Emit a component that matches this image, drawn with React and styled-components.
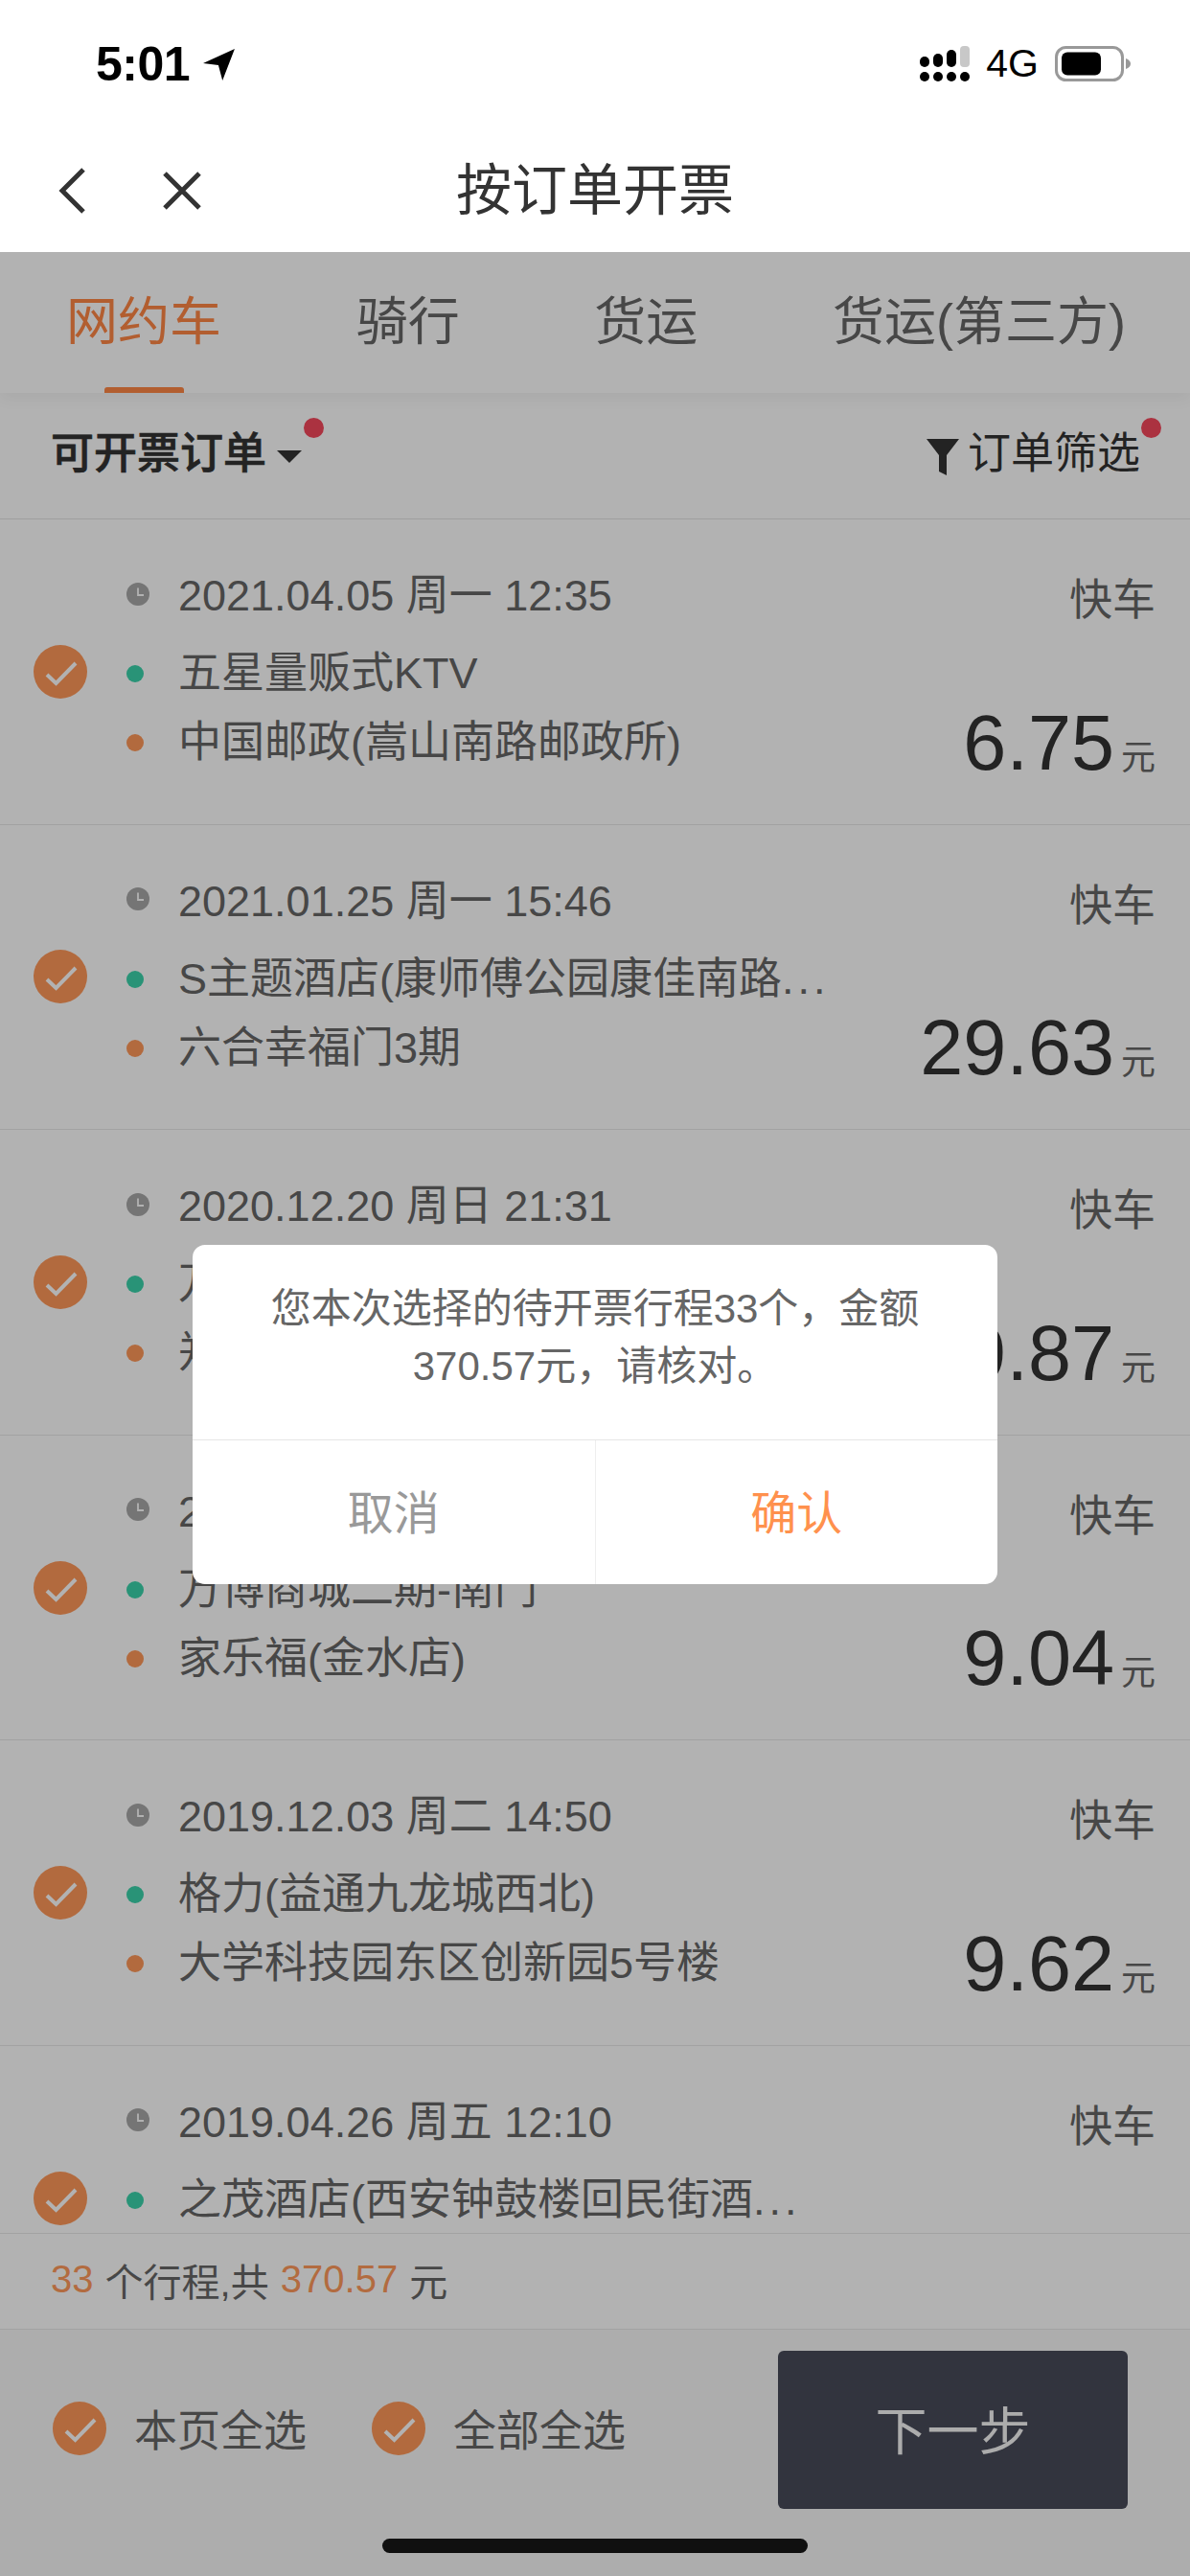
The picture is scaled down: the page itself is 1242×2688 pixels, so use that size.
import React from "react";
import styled, { createGlobalStyle } from "styled-components";

const FONT = '"Liberation Sans", "Noto Sans CJK SC", sans-serif';

const Global = createGlobalStyle`
  html, body { margin: 0; padding: 0; background: #fff; }
  * { box-sizing: border-box; }
`;

const Page = styled.div`
  position: relative;
  width: 1242px;
  height: 2688px;
  display: flex;
  flex-direction: column;
  overflow: hidden;
  background: #fff;
  font-family: ${FONT};
  color: #333;
`;

const Top = styled.header`
  position: relative;
  z-index: 2;
  height: 263px;
  flex-shrink: 0;
  background: #fff;
  display: flex;
  flex-direction: column;
`;

const StatusBar = styled.div`
  height: 130px;
  padding: 44px 61px 0 100px;
  display: flex;
  justify-content: space-between;
  align-items: flex-start;
  color: #000;
`;

const Clock = styled.div`
  display: flex;
  align-items: center;
  gap: 14px;
  height: 46px;
  font-size: 50px;
  font-weight: 700;
  letter-spacing: -0.5px;
`;

const Indicators = styled.div`
  display: flex;
  align-items: center;
  gap: 17px;
  height: 46px;
  margin-top: -1px;
  font-size: 41px;
`;

const NavBar = styled.div`
  position: relative;
  flex: 1;
  display: flex;
  align-items: center;
  padding: 5px 0 0 60px;
  gap: 78px;
`;

const NavTitle = styled.h1`
  position: absolute;
  left: 0;
  right: 0;
  top: 36px;
  margin: 0;
  text-align: center;
  font-size: 58px;
  line-height: 66px;
  font-weight: 400;
  color: #333;
`;

const Tabs = styled.nav`
  height: 147px;
  flex-shrink: 0;
  background: #fff;
  padding: 0 67px 0 69px;
  display: flex;
  justify-content: space-between;
  position: relative;
  z-index: 1;
  box-shadow: 0 5px 16px rgba(0, 0, 0, 0.06);
`;

const Tab = styled.div`
  position: relative;
  height: 100%;
  padding-top: 43px;
  font-size: 54px;
  line-height: 60px;
  color: ${(p) => (p.$active ? "#ff8746" : "#666")};

  ${(p) =>
    p.$active &&
    `&::after {
      content: "";
      position: absolute;
      left: 40px;
      bottom: 0;
      width: 83px;
      height: 6px;
      border-radius: 3px 3px 0 0;
      background: #ff8746;
    }`}
`;

const FilterBar = styled.div`
  height: 132px;
  flex-shrink: 0;
  background: #fff;
  border-bottom: 1px solid #e4e4e4;
  padding: 0 52px 0 53px;
  display: flex;
  justify-content: space-between;
  align-items: center;
`;

const FilterLabel = styled.div`
  position: relative;
  display: flex;
  align-items: center;
  font-size: 45px;
  line-height: 54px;
  font-weight: ${(p) => (p.$strong ? 500 : 400)};
  -webkit-text-stroke: ${(p) => (p.$strong ? "0.7px #333" : "0")};
  margin-top: -4px;
`;

const Caret = styled.span`
  width: 0;
  height: 0;
  margin-left: 11px;
  margin-top: 5px;
  border-left: 13px solid transparent;
  border-right: 13px solid transparent;
  border-top: 13px solid #333;
`;

const RedDot = styled.span`
  position: absolute;
  top: -11px;
  right: ${(p) => p.$right}px;
  width: 21px;
  height: 21px;
  border-radius: 50%;
  background: #f5485c;
`;

const FunnelSlot = styled.span`
  margin: 6px 9px 0 0;
`;

const List = styled.main`
  flex: 1;
  min-height: 0;
  overflow: hidden;
  background: #fff;
`;

const Row = styled.article`
  height: 318.6px;
  border-bottom: 1px solid #e8e8e8;
  display: flex;
  align-items: stretch;
  padding: 0 36px 0 35px;
`;

const CheckSlot = styled.div`
  width: 97px;
  flex-shrink: 0;
  display: flex;
  align-items: center;
`;

const Stops = styled.div`
  flex: 1;
  min-width: 0;
  padding-top: 57px;
  display: flex;
  flex-direction: column;
`;

const StopLine = styled.div`
  height: 46px;
  display: flex;
  align-items: center;
  font-size: 45px;
  line-height: 46px;
  color: #666;
  white-space: nowrap;
  margin-bottom: ${(p) => p.$after}px;
`;

const Marker = styled.span`
  width: 54px;
  flex-shrink: 0;
  display: flex;
  align-items: center;
  margin-bottom: ${(p) => p.$lift || 0}px;
`;

const Dot = styled.i`
  display: block;
  width: 18px;
  height: 18px;
  border-radius: 50%;
  background: ${(p) => p.$color};
`;

const Dots = styled.span`
  letter-spacing: 4px;
`;

const Side = styled.div`
  flex-shrink: 0;
  padding: 62px 0 30px;
  display: flex;
  flex-direction: column;
  justify-content: space-between;
  align-items: flex-end;
`;

const Kind = styled.div`
  font-size: 45px;
  line-height: 46px;
  color: #666;
`;

const Amount = styled.div`
  display: flex;
  align-items: baseline;
  gap: 7px;
  font-size: 81px;
  line-height: 78px;
  color: #333;
`;

const Yuan = styled.span`
  font-size: 36px;
  color: #666;
`;

const Summary = styled.div`
  height: 100px;
  flex-shrink: 0;
  background: #fff;
  border-top: 1px solid #e8e8e8;
  padding: 0 0 4px 53px;
  display: flex;
  align-items: center;
  font-size: 40px;
  white-space: pre;
  word-spacing: 1px;
  color: #666;
`;

const Accent = styled.span`
  color: #ff9a5c;
`;

const Footer = styled.footer`
  position: relative;
  height: 258px;
  flex-shrink: 0;
  background: #f8f8f8;
  border-top: 1px solid #e8e8e8;
  padding: 22px 65px 0 55px;
  display: flex;
  align-items: flex-start;
`;

const SelectAll = styled.div`
  height: 165px;
  padding-bottom: 4px;
  display: flex;
  align-items: center;
  gap: 29px;
  margin-right: 68px;
  font-size: 45px;
  color: #666;
`;

const NextButton = styled.button`
  margin-left: auto;
  width: 365px;
  height: 165px;
  padding: 0 0 5px;
  border: 0;
  border-radius: 6px;
  background: #484b5a;
  color: #f6f6f6;
  font-family: ${FONT};
  font-size: 54px;
`;

const HomeBar = styled.div`
  position: absolute;
  left: 399px;
  bottom: 24px;
  width: 444px;
  height: 15px;
  border-radius: 8px;
  background: #181818;
`;

const Backdrop = styled.div`
  position: absolute;
  z-index: 1;
  top: 263px;
  left: 0;
  right: 0;
  bottom: 0;
  background: rgba(0, 0, 0, 0.3);
  display: flex;
  align-items: center;
  justify-content: center;
`;

const Dialog = styled.div`
  width: 840px;
  height: 354px;
  background: #fff;
  border-radius: 13px;
  overflow: hidden;
  display: flex;
  flex-direction: column;
`;

const DialogBody = styled.p`
  height: 204px;
  margin: 0;
  padding: 37px 70px 0;
  text-align: center;
  font-size: 42px;
  line-height: 60px;
  color: #666;
  border-bottom: 1px solid #e6e6e6;
`;

const DialogActions = styled.div`
  flex: 1;
  display: flex;
`;

const DialogAction = styled.div`
  flex: 1;
  padding-bottom: 5px;
  display: flex;
  align-items: center;
  justify-content: center;
  font-size: 48px;
  color: ${(p) => p.$color};
  & + & {
    border-left: 1px solid #eee;
  }
`;

const Icon = styled.svg`
  display: block;
  flex-shrink: 0;
`;

const CheckMark = () => (
  <Icon width="56" height="56" viewBox="0 0 56 56">
    <circle cx="28" cy="28" r="28" fill="#ff995a" />
    <path d="M14 31 L23.500 40 L44 19" fill="none" stroke="#fff" strokeWidth="4" />
  </Icon>
);

const ClockDot = () => (
  <Icon width="24" height="24" viewBox="0 0 24 24">
    <circle cx="12" cy="12" r="12" fill="#a8a8a8" />
    <path d="M12 5.500 V13 H18" fill="none" stroke="#fff" strokeWidth="1.800" />
  </Icon>
);

const SignalDots = () => (
  <Icon width="52" height="37" viewBox="0 0 52 37">
    <g fill="#000">
      <rect x="0" y="11" width="10" height="11" rx="5" />
      <rect x="14" y="8" width="10" height="14" rx="5" />
      <rect x="28" y="4" width="10" height="18" rx="5" />
      <rect x="42" y="0" width="10" height="22" rx="4" fill="#c8c8c8" />
      <circle cx="5" cy="32" r="5" />
      <circle cx="19" cy="32" r="5" />
      <circle cx="33" cy="32" r="5" />
      <circle cx="47" cy="32" r="5" />
    </g>
  </Icon>
);

const Battery = () => (
  <Icon width="80" height="37" viewBox="0 0 80 37">
    <rect x="1.500" y="1.500" width="69" height="34" rx="10" fill="none" stroke="#999" strokeWidth="3" />
    <rect x="7" y="6.500" width="41" height="24" rx="6" fill="#000" />
    <path d="M74 13 Q79 15 79 18.500 Q79 22 74 24 Z" fill="#999" />
  </Icon>
);

const TRIPS = [
  { date: "2021.04.05 周一 12:35", from: "五星量贩式KTV", to: "中国邮政(嵩山南路邮政所)", price: "6.75" },
  { date: "2021.01.25 周一 15:46", from: "S主题酒店(康师傅公园康佳南路", cut: true, to: "六合幸福门3期", price: "29.63" },
  { date: "2020.12.20 周日 21:31", from: "万博商城二期-南门", to: "郑州东站", price: "19.87" },
  { date: "2020.12.13 周日 18:20", from: "万博商城二期-南门", to: "家乐福(金水店)", price: "9.04" },
  { date: "2019.12.03 周二 14:50", from: "格力(益通九龙城西北)", to: "大学科技园东区创新园5号楼", price: "9.62" },
  { date: "2019.04.26 周五 12:10", from: "之茂酒店(西安钟鼓楼回民街酒", cut: true },
];

function TripRow({ date, from, cut, to, price }) {
  return (
    <Row>
      <CheckSlot>
        <CheckMark />
      </CheckSlot>
      <Stops>
        <StopLine $after={35}>
          <Marker $lift={5}>
            <ClockDot />
          </Marker>
          {date}
        </StopLine>
        <StopLine $after={26}>
          <Marker>
            <Dot $color="#3cd3ab" />
          </Marker>
          <span>
            {from}
            {cut && <Dots>...</Dots>}
          </span>
        </StopLine>
        {to && (
          <StopLine $after={0}>
            <Marker>
              <Dot $color="#ff995a" />
            </Marker>
            {to}
          </StopLine>
        )}
      </Stops>
      <Side>
        <Kind>快车</Kind>
        {price && (
          <Amount>
            {price}
            <Yuan>元</Yuan>
          </Amount>
        )}
      </Side>
    </Row>
  );
}

export default function App() {
  return (
    <Page>
      <Global />
      <Top>
        <StatusBar>
          <Clock>
            5:01
            <Icon width="34" height="34" viewBox="0 0 32 32">
              <path d="M31 1 L0 15 L15 17 L19 32 Z" fill="#000" />
            </Icon>
          </Clock>
          <Indicators>
            <SignalDots />
            4G
            <Battery />
          </Indicators>
        </StatusBar>
        <NavBar>
          <Icon width="32" height="48" viewBox="0 0 32 48">
            <path d="M27 2 L5 24 L27 46" fill="none" stroke="#333" strokeWidth="5" />
          </Icon>
          <Icon width="40" height="40" viewBox="0 0 40 40">
            <path d="M2 2 L38 38 M38 2 L2 38" fill="none" stroke="#333" strokeWidth="5" />
          </Icon>
          <NavTitle>按订单开票</NavTitle>
        </NavBar>
      </Top>

      <Tabs>
        <Tab $active>网约车</Tab>
        <Tab>骑行</Tab>
        <Tab>货运</Tab>
        <Tab>货运(第三方)</Tab>
      </Tabs>

      <FilterBar>
        <FilterLabel $strong>
          可开票订单
          <Caret />
          <RedDot $right={-23} />
        </FilterLabel>
        <FilterLabel>
          <FunnelSlot>
            <Icon width="34" height="38" viewBox="0 0 34 38">
              <path d="M0 0 H34 L21 17 V38 L13 34 V17 Z" fill="#333" />
            </Icon>
          </FunnelSlot>
          订单筛选
          <RedDot $right={-22} />
        </FilterLabel>
      </FilterBar>

      <List>
        {TRIPS.map((trip) => (
          <TripRow key={trip.date} {...trip} />
        ))}
      </List>

      <Summary>
        <Accent>33</Accent> 个行程,共 <Accent>370.57</Accent> 元
      </Summary>

      <Footer>
        <SelectAll>
          <CheckMark />
          本页全选
        </SelectAll>
        <SelectAll>
          <CheckMark />
          全部全选
        </SelectAll>
        <NextButton>下一步</NextButton>
        <HomeBar />
      </Footer>

      <Backdrop>
        <Dialog>
          <DialogBody>您本次选择的待开票行程33个，金额370.57元，请核对。</DialogBody>
          <DialogActions>
            <DialogAction $color="#999">取消</DialogAction>
            <DialogAction $color="#ff914d">确认</DialogAction>
          </DialogActions>
        </Dialog>
      </Backdrop>
    </Page>
  );
}
